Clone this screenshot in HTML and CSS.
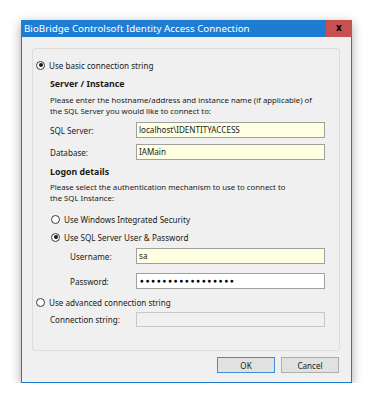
FILE: index.html
```html
<!DOCTYPE html>
<html lang="en">
<head>
    <meta charset="UTF-8">
    <title>BioBridge Controlsoft Identity Access Connection</title>
    <link rel="stylesheet" href="styles.css">
</head>
<body>
    <div class="window">
        <div class="titlebar">
            <span class="title">BioBridge Controlsoft Identity Access Connection</span>
            <span class="close">x</span>
        </div>

        <div class="panel">
            <div class="radio-row top">
                <span class="radio checked"></span>
                <span>Use basic connection string</span>
            </div>

            <div class="section">
                <div class="heading">Server / Instance</div>
                <div class="desc">Please enter the hostname/address and instance name (if applicable) of<br>the SQL Server you would like to connect to:</div>

                <div class="field first">
                    <label>SQL Server:</label>
                    <div class="input yellow">localhost\IDENTITYACCESS</div>
                </div>
                <div class="field db">
                    <label>Database:</label>
                    <div class="input yellow">IAMain</div>
                </div>

                <div class="heading logon">Logon details</div>
                <div class="desc desc2">Please select the authentication mechanism to use to connect to<br>the SQL Instance:</div>

                <div class="radio-row sub win">
                    <span class="radio"></span>
                    <span>Use Windows Integrated Security</span>
                </div>
                <div class="radio-row sub sqlauth">
                    <span class="radio checked"></span>
                    <span>Use SQL Server User &amp; Password</span>
                </div>

                <div class="field user">
                    <label>Username:</label>
                    <div class="input yellow">sa</div>
                </div>
                <div class="field pass">
                    <label>Password:</label>
                    <div class="input dots">&#9679;&#9679;&#9679;&#9679;&#9679;&#9679;&#9679;&#9679;&#9679;&#9679;&#9679;&#9679;&#9679;&#9679;&#9679;&#9679;&#9679;</div>
                </div>
            </div>

            <div class="radio-row top adv">
                <span class="radio"></span>
                <span>Use advanced connection string</span>
            </div>
            <div class="section">
                <div class="field conn">
                    <label>Connection string:</label>
                    <div class="input disabled"></div>
                </div>
            </div>
        </div>

        <div class="buttons">
            <button class="btn default">OK</button>
            <button class="btn">Cancel</button>
        </div>
    </div>
</body>
</html>
```

FILE: styles.css
```css
body {
    margin: 0;
    background: #fff;
    font-family: "Noto Sans", "Open Sans", sans-serif;
    font-size: 8.1px;
    color: #1a1a1a;
}
.window {
    margin: 20px 0 0 21px;
    width: 331px;
    height: 363px;
    box-sizing: border-box;
    border: 1px solid #1c7ad0;
    background: #f0f0f0;
    box-shadow: 0 3px 10px rgba(0, 0, 0, 0.35);
}
.titlebar {
    height: 17px;
    background: #1e7cd3;
    display: flex;
    align-items: center;
    justify-content: space-between;
    margin: -1px -1px 0 -1px;
}
.title {
    color: #fff;
    font-size: 9.8px;
    padding-left: 3px;
}
.close {
    width: 26px;
    height: 17px;
    background: #c75050;
    color: #000;
    font-weight: bold;
    font-size: 10px;
    line-height: 15px;
    text-align: center;
}
.panel {
    margin: 11px 11px 0 10px;
    height: 303px;
    box-sizing: border-box;
    border: 1px solid #dcdcdc;
    border-radius: 3px;
    padding-top: 10px;
}
.radio-row {
    display: flex;
    align-items: center;
    height: 12px;
    gap: 4px;
}
.radio-row.top {
    margin-left: 3px;
}
.radio-row.adv {
    margin-top: 7px;
}
.radio {
    width: 9px;
    height: 9px;
    box-sizing: border-box;
    border: 1px solid #3a3a3a;
    border-radius: 50%;
    background: #fff;
    display: flex;
    align-items: center;
    justify-content: center;
}
.radio.checked::after {
    content: "";
    width: 4px;
    height: 4px;
    border-radius: 50%;
    background: #1a1a1a;
}
.section {
    margin-left: 17px;
}
.heading {
    font-weight: bold;
    font-size: 8.8px;
    height: 12px;
    line-height: 12px;
    margin-top: 7px;
}
.heading.logon {
    margin-top: 6px;
}
.desc {
    font-size: 7.8px;
    line-height: 11px;
    margin-top: 5px;
}
.desc.desc2 {
    margin-top: 4px;
}
.field {
    display: flex;
    align-items: center;
    height: 16px;
}
.field label {
    width: 86px;
}
.field.first {
    margin-top: 5px;
}
.field.db {
    margin-top: 6px;
}
.field.user {
    margin-top: 5px;
}
.field.pass {
    margin-top: 9px;
}
.field.user label,
.field.pass label {
    width: 66px;
    margin-left: 20px;
}
.field.conn {
    margin-top: 4px;
    height: 15px;
}
.input {
    width: 189px;
    height: 100%;
    box-sizing: border-box;
    border: 1px solid #a0a0a0;
    background: #fff;
    padding-left: 2px;
    line-height: 14px;
    white-space: nowrap;
    overflow: hidden;
}
.input.yellow {
    background: #ffffe1;
}
.input.disabled {
    background: #f0f0f0;
    border-color: #c8c8c8;
}
.input.dots {
    font-size: 6.5px;
    letter-spacing: 1.7px;
    padding-left: 3px;
    color: #000;
}
.radio-row.sub {
    margin-left: 1px;
}
.radio-row.win {
    margin-top: 9px;
}
.radio-row.sqlauth {
    margin-top: 6px;
}
.buttons {
    display: flex;
    justify-content: flex-end;
    gap: 6px;
    margin: 6px 12px 0 0;
}
.btn {
    width: 58px;
    height: 16px;
    padding: 0;
    font-family: inherit;
    font-size: 8.1px;
    color: #1a1a1a;
    background: #e1e1e1;
    border: 1px solid #adadad;
}
.btn.default {
    border-color: #3c8fdc;
}
```
